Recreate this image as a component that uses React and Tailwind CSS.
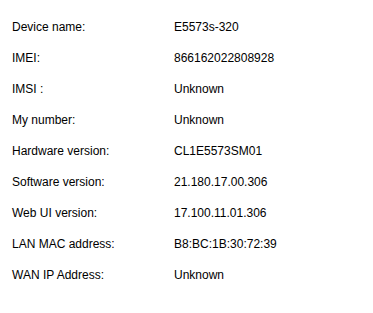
const rows = [
  ['Device name:', 'E5573s-320'],
  ['IMEI:', '866162022808928'],
  ['IMSI :', 'Unknown'],
  ['My number:', 'Unknown'],
  ['Hardware version:', 'CL1E5573SM01'],
  ['Software version:', '21.180.17.00.306'],
  ['Web UI version:', '17.100.11.01.306'],
  ['LAN MAC address:', 'B8:BC:1B:30:72:39'],
  ['WAN IP Address:', 'Unknown'],
];

export default function App() {
  return (
    <div className="w-[373px] h-[313px] bg-white pt-3 pl-3 font-['Liberation_Sans',Arial,sans-serif] text-[12px] text-black">
      {rows.map(([label, value]) => (
        <div key={label} className="flex h-[31px] leading-[31px]">
          <div className="w-[162px]">{label}</div>
          <div>{value}</div>
        </div>
      ))}
    </div>
  );
}
